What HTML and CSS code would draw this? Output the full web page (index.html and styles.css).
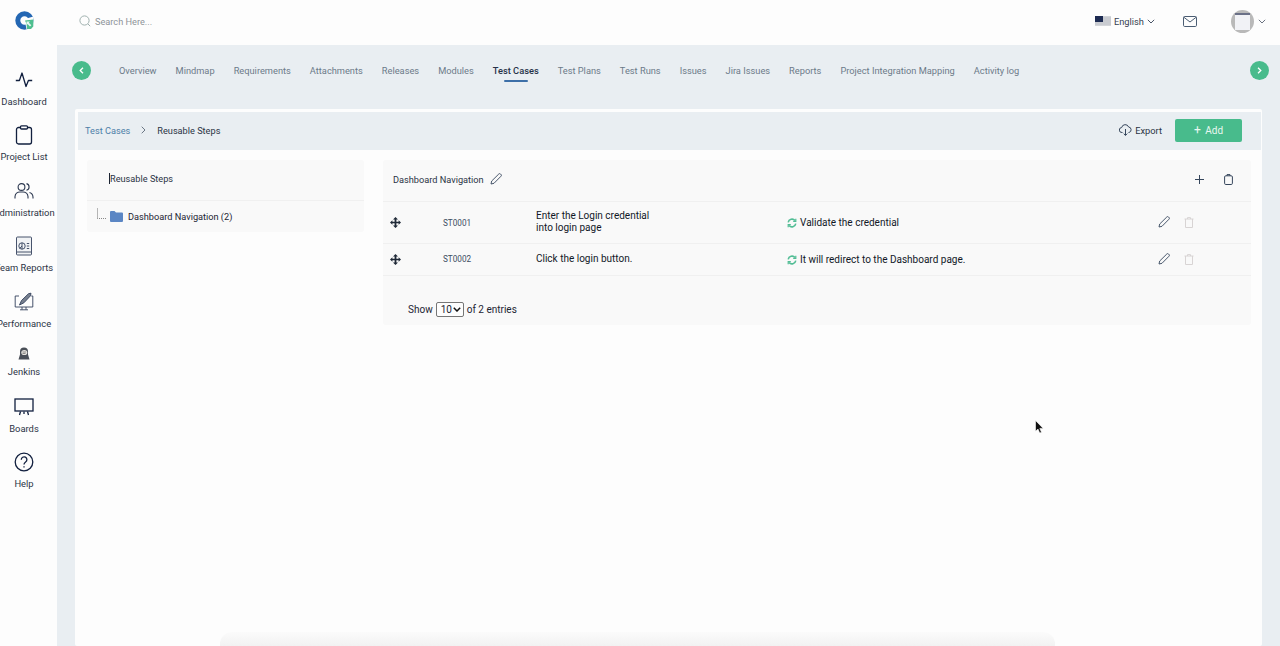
FILE: index.html
```html
<!DOCTYPE html>
<html lang="en">
<head>
    <meta charset="UTF-8">
    <title>Reusable Steps</title>
    <link rel="stylesheet" href="styles.css">
</head>
<body>
    <div class="app">
        <header class="topbar">
            <div class="logo">
                <svg width="19" height="19" viewBox="0 0 19 19">
                    <circle cx="9.500" cy="9.500" r="6.700" fill="none" stroke="#2467b3" stroke-width="5"/>
                    <path d="M8 8.500 18.500 5.500V16L16.500 18.500H11.500L10.500 13Z" fill="#fdfdfd"/>
                    <path d="M10 9.500 18.300 8.500V15.500L16 18H12L11.500 13Z" fill="#4fbf8f"/>
                    <path d="M11.500 10.500H15L13.800 11.800 16.300 14.300 15 15.600 12.500 13.100 11.500 14.200Z" fill="#e8f7f0"/>
                </svg>
            </div>
            <div class="search">
                <svg width="12" height="12" viewBox="0 0 12 12" fill="none" stroke="#9fb0ae" stroke-width="1">
                    <circle cx="5.500" cy="5.500" r="4.600"/><path d="M9 9l2.200 2.200"/>
                </svg>
                <span>Search Here...</span>
            </div>
            <div class="top-right">
                <div class="lang">
                    <svg class="flag" width="16" height="10" viewBox="0 0 16 10">
                        <rect width="16" height="10" fill="#d4d6da"/>
                        <path d="M0 2h16M0 4h16M0 6h16M0 8h16" stroke="#b9bcc4" stroke-width=".8"/>
                        <rect width="8" height="6" fill="#1d2b52"/>
                    </svg>
                    <span>English</span>
                    <svg width="8" height="5" viewBox="0 0 8 5" fill="none" stroke="#4a5568"><path d="M.8.8 4 4l3.200-3.200"/></svg>
                </div>
                <svg class="mail" width="14" height="11" viewBox="0 0 14 11" fill="none" stroke="#4b5d73">
                    <rect x=".5" y=".5" width="13" height="10" rx="1.200"/><path d="M.8 1.200 7 6l6.200-4.800"/>
                </svg>
                <div class="avatar"><div class="avatar-inner"></div></div>
                <svg width="8" height="5" viewBox="0 0 8 5" fill="none" stroke="#6b7280"><path d="M.8.8 4 4l3.200-3.200"/></svg>
            </div>
        </header>

        <div class="body-row">
            <aside class="sidebar">
                <div class="side-item">
                    <svg width="18" height="18" viewBox="0 0 18 18" fill="none" stroke="#12203f" stroke-width="1.300" stroke-linejoin="round"><path d="M.8 9.500h3.600L7 2l4 13.500 2.400-6h3.800"/></svg>
                    <span>Dashboard</span>
                </div>
                <div class="side-item">
                    <svg width="18" height="20" viewBox="0 0 18 20" fill="none" stroke="#12203f" stroke-width="1.300"><rect x="1.500" y="2.500" width="15" height="16.500" rx="2"/><rect x="5.500" y=".8" width="7" height="3.200" rx="1" fill="#fff"/></svg>
                    <span>Project List</span>
                </div>
                <div class="side-item">
                    <svg width="20" height="18" viewBox="0 0 20 18" fill="none" stroke="#2c3850" stroke-width="1.100"><circle cx="7.500" cy="5" r="3.400"/><path d="M1 16.500v-2a5 5 0 0 1 5-4.500h3a5 5 0 0 1 5 4.500v2M12.500 1.600a3.400 3.400 0 0 1 0 6.600M15.500 10.500a5 5 0 0 1 3.500 4.500v1.500"/></svg>
                    <span>Administration</span>
                </div>
                <div class="side-item">
                    <svg width="16" height="19" viewBox="0 0 16 19" fill="none" stroke="#33415c" stroke-width=".9"><rect x=".5" y=".5" width="15" height="18" rx="1" fill="#f1f3f5"/><circle cx="6" cy="9.500" r="3.200"/><path d="M6 6.300v6.400M6 9.500l-2.200 2.300M10.800 7h2.400M10.800 9.500h2.400M10.800 12h2.400M1 15.500h14"/></svg>
                    <span>Team Reports</span>
                </div>
                <div class="side-item">
                    <svg width="20" height="19" viewBox="0 0 20 19" fill="none" stroke="#33415c" stroke-width=".9"><path d="M5 3.500H1.200v11h17.600v-11h-1.500M8 14.500v2.600M12 14.500v2.600M6 17.300h8"/><path d="M5.500 12.500 7.500 8l7-6.800 2.500-.5-.5 2.600-6.600 7z" fill="#77808f"/></svg>
                    <span>Performance</span>
                </div>
                <div class="side-item jenkins">
                    <svg width="12" height="13" viewBox="0 0 12 13"><path d="M6 .5a4 4 0 0 1 4 4v3l1.500 5H.5L2 7.500v-3a4 4 0 0 1 4-4z" fill="#4a4f58"/><ellipse cx="6.300" cy="5.500" rx="3" ry="2.600" fill="#e6e3de"/><path d="M4.500 5h3.600M4.500 6.500h3" stroke="#555" stroke-width=".6"/></svg>
                    <span>Jenkins</span>
                </div>
                <div class="side-item">
                    <svg width="20" height="18" viewBox="0 0 20 18" fill="none" stroke="#12203f" stroke-width="1.300"><rect x="1" y="1" width="18" height="12"/><path d="M6.500 13.500 5.500 17M13.500 13.500l1 3.500M10 13.500V16"/></svg>
                    <span>Boards</span>
                </div>
                <div class="side-item">
                    <svg width="20" height="20" viewBox="0 0 20 20" fill="none" stroke="#12203f" stroke-width="1.300"><circle cx="10" cy="10" r="8.800"/><path d="M7.300 7.700a2.800 2.800 0 1 1 4.300 2.300c-1 .7-1.600 1.200-1.600 2.400"/><path d="M10 14.200v1.300"/></svg>
                    <span>Help</span>
                </div>
            </aside>

            <main class="main">
                <nav class="tabs">
                    <button class="round-btn">
                        <svg width="5" height="7" viewBox="0 0 5 7" fill="none" stroke="#fff" stroke-width="1.300"><path d="M4 .8 1.200 3.500 4 6.200"/></svg>
                    </button>
                    <ul class="tab-list">
                        <li>Overview</li>
                        <li>Mindmap</li>
                        <li>Requirements</li>
                        <li>Attachments</li>
                        <li>Releases</li>
                        <li>Modules</li>
                        <li class="active">Test Cases</li>
                        <li>Test Plans</li>
                        <li>Test Runs</li>
                        <li>Issues</li>
                        <li>Jira Issues</li>
                        <li>Reports</li>
                        <li>Project Integration Mapping</li>
                        <li>Activity log</li>
                    </ul>
                    <button class="round-btn">
                        <svg width="5" height="7" viewBox="0 0 5 7" fill="none" stroke="#fff" stroke-width="1.300"><path d="M1 .8 3.800 3.500 1 6.200"/></svg>
                    </button>
                </nav>

                <section class="card">
                    <div class="crumb-bar">
                        <div class="crumbs">
                            <a class="crumb-link">Test Cases</a>
                            <svg width="5" height="8" viewBox="0 0 5 8" fill="none" stroke="#6b7785"><path d="M.7.7 4 4 .7 7.300"/></svg>
                            <span>Reusable Steps</span>
                        </div>
                        <div class="crumb-actions">
                            <div class="export">
                                <svg width="13" height="12" viewBox="0 0 13 12" fill="none" stroke="#36465c"><path d="M3.500 8.500H3a2.500 2.500 0 0 1-.3-5A3.600 3.600 0 0 1 9.600 3a2.800 2.800 0 0 1 .4 5.500h-.5M6.500 5v6.300M4.700 9.600l1.800 1.800 1.800-1.800"/></svg>
                                <span>Export</span>
                            </div>
                            <button class="add-btn"><span class="plus">+</span> Add</button>
                        </div>
                    </div>

                    <div class="panels">
                        <div class="tree-panel">
                            <div class="tree-title"><span class="caret"></span>Reusable Steps</div>
                            <div class="tree-row">
                                <span class="tree-line"></span>
                                <svg width="13" height="11" viewBox="0 0 13 11"><path d="M0 1a1 1 0 0 1 1-1h3.500l1.500 1.500h6a1 1 0 0 1 1 1V10a1 1 0 0 1-1 1H1a1 1 0 0 1-1-1z" fill="#5b86c4"/></svg>
                                <span>Dashboard Navigation (2)</span>
                            </div>
                        </div>

                        <div class="steps-panel">
                            <div class="steps-head">
                                <div class="steps-title">
                                    <span>Dashboard Navigation</span>
                                    <svg class="pencil" width="12" height="12" viewBox="0 0 12 12" fill="none" stroke="#36465c" stroke-width=".9"><path d="M1 11l.7-3L8.800 1a1.200 1.200 0 0 1 1.700 0l.5.500a1.200 1.200 0 0 1 0 1.700L4 10.300z"/></svg>
                                </div>
                                <div class="steps-tools">
                                    <svg width="9" height="9" viewBox="0 0 9 9" stroke="#36465c"><path d="M4.500 0v9M0 4.500h9"/></svg>
                                    <svg width="9" height="11" viewBox="0 0 9 11" fill="none" stroke="#36465c"><rect x=".6" y="1.800" width="7.800" height="8.700" rx="1.200"/><path d="M3 1.800V.6h3v1.200"/></svg>
                                </div>
                            </div>

                            <div class="step-row">
                                <svg class="move" width="11" height="11" viewBox="0 0 11 11" fill="#1f2937"><path d="M5.500 0 8 2.600H6.400v2.200h2.200V3.200L11 5.500 8.600 7.800V6.200H6.400v2.200H8L5.500 11 3 8.400h1.600V6.200H2.400v1.600L0 5.500l2.400-2.300v1.600h2.200V2.600H3z"/></svg>
                                <span class="step-id">ST0001</span>
                                <span class="step-text">Enter the Login credential<br>into login page</span>
                                <span class="step-result">
                                    <svg width="10" height="10" viewBox="0 0 10 10" fill="none" stroke="#52bd95" stroke-width="1.600"><path d="M1.200 4.300A3.900 3.900 0 0 1 8 2.500M8.800 5.700A3.900 3.900 0 0 1 2 7.500"/><path d="M8.800.8v2.600H6.200M1.200 9.200V6.600h2.600" stroke-width="1.200"/></svg>
                                    Validate the credential
                                </span>
                                <span class="step-actions">
                                    <svg width="12" height="12" viewBox="0 0 12 12" fill="none" stroke="#36465c" stroke-width=".9"><path d="M1 11l.7-3L8.800 1a1.200 1.200 0 0 1 1.700 0l.5.500a1.200 1.200 0 0 1 0 1.700L4 10.300z"/></svg>
                                    <svg width="10" height="11" viewBox="0 0 10 11" fill="none" stroke="#d8d4d4"><path d="M.5 2h9M1.500 2v8.500h7V2M3.500 2V.6h3V2"/></svg>
                                </span>
                            </div>

                            <div class="step-row short">
                                <svg class="move" width="11" height="11" viewBox="0 0 11 11" fill="#1f2937"><path d="M5.500 0 8 2.600H6.400v2.200h2.200V3.200L11 5.500 8.600 7.800V6.200H6.400v2.200H8L5.500 11 3 8.400h1.600V6.200H2.400v1.600L0 5.500l2.400-2.300v1.600h2.200V2.600H3z"/></svg>
                                <span class="step-id">ST0002</span>
                                <span class="step-text">Click the login button.</span>
                                <span class="step-result">
                                    <svg width="10" height="10" viewBox="0 0 10 10" fill="none" stroke="#52bd95" stroke-width="1.600"><path d="M1.200 4.300A3.900 3.900 0 0 1 8 2.500M8.800 5.700A3.900 3.900 0 0 1 2 7.500"/><path d="M8.800.8v2.600H6.200M1.200 9.200V6.600h2.600" stroke-width="1.200"/></svg>
                                    It will redirect to the Dashboard page.
                                </span>
                                <span class="step-actions">
                                    <svg width="12" height="12" viewBox="0 0 12 12" fill="none" stroke="#36465c" stroke-width=".9"><path d="M1 11l.7-3L8.800 1a1.200 1.200 0 0 1 1.700 0l.5.500a1.200 1.200 0 0 1 0 1.700L4 10.300z"/></svg>
                                    <svg width="10" height="11" viewBox="0 0 10 11" fill="none" stroke="#d8d4d4"><path d="M.5 2h9M1.500 2v8.500h7V2M3.500 2V.6h3V2"/></svg>
                                </span>
                            </div>

                            <div class="pager">
                                Show
                                <span class="page-size-wrap">
                                    <select class="page-size"><option>10</option></select>
                                    <svg class="page-arrow" width="8" height="5" viewBox="0 0 8 5" fill="none" stroke="#111" stroke-width="1.500"><path d="M.8.8 4 4l3.200-3.200"/></svg>
                                </span>
                                of 2 entries
                            </div>
                        </div>
                    </div>
                </section>
            </main>
        </div>
    </div>

    <div class="bottom-fade"></div>
    <svg class="cursor" width="10" height="15" viewBox="0 0 10 15"><path d="M.5.500v10.800l2.500-2.200 1.700 4 1.800-.8-1.700-3.900h3.400z" fill="#111" stroke="#fff" stroke-width=".6"/></svg>
</body>
</html>
```

FILE: styles.css
```css
* {
    margin: 0;
    padding: 0;
    box-sizing: border-box;
}

html, body {
    height: 646px;
    overflow: hidden;
}

body {
    font-family: 'Roboto', 'Liberation Sans', sans-serif;
    font-size: 10px;
    color: #1c2433;
    background-color: #fdfdfd;
    position: relative;
}

.app {
    display: flex;
    flex-direction: column;
    height: 646px;
}

/* Top bar */
.topbar {
    height: 45px;
    flex-shrink: 0;
    display: flex;
    align-items: center;
    background-color: #fdfdfd;
}

.logo {
    width: 79px;
    padding-left: 15px;
    display: flex;
    align-items: center;
    margin-top: -4px;
}

.search {
    display: flex;
    align-items: center;
    gap: 4px;
    color: #8d9499;
    font-size: 9.200px;
    margin-top: -3px;
}

.top-right {
    margin-left: auto;
    display: flex;
    align-items: center;
    padding-right: 14px;
    margin-top: -3px;
}

.lang {
    display: flex;
    align-items: center;
    gap: 3px;
    color: #364152;
    font-size: 9.300px;
    margin-right: 28px;
}

.mail {
    margin-right: 34px;
}

.avatar {
    width: 23px;
    height: 23px;
    border-radius: 50%;
    background-color: #b9b9b9;
    display: flex;
    align-items: center;
    justify-content: center;
    margin-right: 4px;
}

.avatar-inner {
    width: 15px;
    height: 17px;
    background-color: #f1f2f6;
    border-top: 2px solid #6a7087;
}

/* Sidebar */
.body-row {
    flex: 1;
    display: flex;
    min-height: 0;
}

.sidebar {
    width: 57px;
    flex-shrink: 0;
    background-color: #fdfdfd;
    padding-top: 24.500px;
    padding-right: 9px;
    overflow: hidden;
}

.side-item {
    width: 48px;
    height: 55.500px;
    display: flex;
    flex-direction: column;
    align-items: center;
    color: #2b3445;
    font-size: 9.400px;
    white-space: nowrap;
}

.side-item svg {
    height: 20px;
    margin-bottom: 6px;
}

.side-item.jenkins {
    height: 49.500px;
}

.side-item.jenkins svg {
    height: 13px;
    margin-bottom: 6px;
}

/* Main */
.main {
    flex: 1;
    min-width: 0;
    background-color: #e9eef2;
    display: flex;
    flex-direction: column;
    padding: 0 18px 0 15px;
}

.tabs {
    height: 64px;
    flex-shrink: 0;
    display: flex;
    align-items: flex-start;
    padding-top: 16px;
    margin-right: -7px;
}

.round-btn {
    width: 19px;
    height: 19px;
    border: none;
    border-radius: 50%;
    background-color: #48bb8c;
    display: flex;
    align-items: center;
    justify-content: center;
    flex-shrink: 0;
}

.tab-list {
    list-style: none;
    display: flex;
    gap: 19px;
    flex: 1;
    padding-left: 28px;
    padding-top: 4px;
    color: #6c7a89;
    font-size: 9.270px;
    white-space: nowrap;
}

.tab-list li {
    position: relative;
}

.tab-list .active {
    color: #263248;
    font-weight: 500;
}

.tab-list .active::after {
    content: "";
    position: absolute;
    left: 11px;
    right: 11px;
    bottom: -6px;
    height: 2px;
    background-color: #3d6fa8;
    border-radius: 1px;
}

/* Card */
.card {
    flex: 1;
    margin-left: 3px;
    background-color: #fdfdfd;
    padding: 3px 1px 0 3px;
    border-radius: 2px;
}

.crumb-bar {
    height: 38px;
    background-color: #e9eef2;
    display: flex;
    align-items: center;
    justify-content: space-between;
    padding: 0 19px 2px 7px;
}

.crumbs {
    display: flex;
    align-items: center;
    gap: 11px;
    color: #2b3445;
    font-size: 9.200px;
}

.crumb-link {
    color: #4d7ea8;
}

.crumb-actions {
    display: flex;
    align-items: center;
    gap: 13px;
}

.export {
    display: flex;
    align-items: center;
    gap: 3px;
    color: #2b3445;
    font-size: 9.300px;
}

.add-btn {
    width: 67px;
    height: 23px;
    border: none;
    border-radius: 2px;
    background-color: #48bb8c;
    color: #e8f7f0;
    font-family: inherit;
    font-size: 10px;
}

.plus {
    font-size: 12px;
    margin-right: 2px;
}

.panels {
    display: flex;
    align-items: flex-start;
    gap: 19px;
    padding: 10px 10px 0 9px;
}

.tree-panel {
    width: 277px;
    flex-shrink: 0;
    background-color: #f9f9f9;
    border-radius: 3px;
}

.tree-title {
    height: 41px;
    display: flex;
    align-items: center;
    padding: 0 0 3px 22px;
    border-bottom: 1px solid #f0f0f0;
    color: #2b3445;
    font-size: 9.200px;
}

.caret {
    width: 1px;
    height: 11px;
    background-color: #1c2433;
}

.tree-row {
    height: 31px;
    display: flex;
    align-items: center;
    padding-left: 10px;
    color: #1c2433;
    font-size: 9.200px;
}

.tree-row svg {
    margin-right: 5px;
}

.tree-line {
    width: 9px;
    height: 11px;
    border-left: 1px solid #b5b5b5;
    border-bottom: 1px dotted #888;
    margin-right: 4px;
    margin-top: -6px;
}

.steps-panel {
    flex: 1;
    min-width: 0;
    background-color: #f9f9f9;
    border-radius: 3px;
}

.steps-head {
    height: 42px;
    display: flex;
    align-items: center;
    justify-content: space-between;
    padding: 0 18px 0 10px;
    border-bottom: 1px solid #f0f0f0;
}

.steps-title {
    display: flex;
    align-items: center;
    gap: 6px;
    color: #2b3445;
    font-size: 9.200px;
    margin-top: -3px;
}

.steps-tools {
    display: flex;
    align-items: center;
    gap: 20px;
    margin-top: -2px;
}

.step-row {
    height: 42px;
    display: grid;
    grid-template-columns: 60px 93px 251px 1fr 93px;
    align-items: center;
    border-bottom: 1px solid #f0f0f0;
    color: #111827;
    line-height: 12px;
}

.step-row.short {
    height: 32px;
}

.move {
    margin-left: 7px;
}

.step-id {
    font-size: 8.200px;
    color: #3d4d63;
}

.short .step-id,
.step-text {
    margin-top: -2px;
}

.step-result {
    display: flex;
    align-items: center;
    gap: 3px;
}

.step-actions {
    display: flex;
    align-items: center;
    gap: 14px;
    margin-top: -1px;
}

.pager {
    height: 49px;
    display: flex;
    align-items: center;
    gap: 3px;
    padding: 18px 0 0 25px;
    color: #1c2433;
}

.page-size-wrap {
    position: relative;
    display: flex;
}

.page-size {
    appearance: none;
    width: 28px;
    height: 15px;
    font-family: inherit;
    font-size: 10px;
    padding: 0 0 0 4px;
    background-color: #fdfdfd;
    border: 1px solid #767676;
    border-radius: 2px;
    color: #1c2433;
}

.page-arrow {
    position: absolute;
    right: 3px;
    top: 5px;
}

/* Bits lying over the page */
.bottom-fade {
    position: absolute;
    left: 220px;
    bottom: 0;
    width: 835px;
    height: 14px;
    background: linear-gradient(#fbfbfb, #f2f2f2);
    border-radius: 12px 12px 0 0;
}

.cursor {
    position: absolute;
    left: 1035px;
    top: 420px;
}
```
